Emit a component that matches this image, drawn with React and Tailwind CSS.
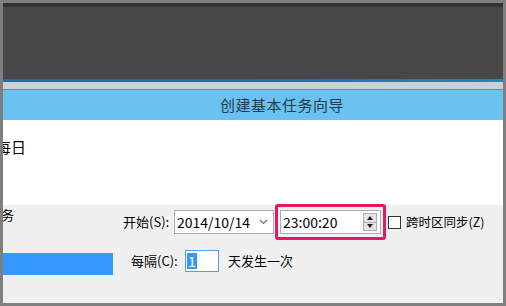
export default function App() {
  const font = { fontFamily: '"Microsoft YaHei", "Noto Sans CJK SC", "Liberation Sans", sans-serif' };
  return (
    <div className="w-[506px] h-[306px] bg-[#7f7f7f] p-[3px] overflow-hidden" style={font}>
      <div className="w-[500px] h-[300px] flex flex-col overflow-hidden">
        {/* dark top area */}
        <div className="h-[4px] bg-[#333333]" />
        <div className="h-[72px] bg-[#474747]" />
        <div className="h-[3px] bg-gradient-to-r from-[#1c6fa3] via-[#1c6fa3] to-[#2185c8]" />
        <div className="h-[7px] bg-[#d0d0d0]" />
        <div className="h-[1px] bg-[#5d8fae]" />

        {/* title bar */}
        <div className="h-[30px] bg-[#6ac2f0] flex items-center justify-center pl-[58px]">
          <span className="text-[15px] text-[#213c4f] tracking-[0.5px]">创建基本任务向导</span>
        </div>

        {/* white content */}
        <div className="h-[85px] bg-white relative">
          <span className="absolute left-[-7px] top-[16px] text-[15px] text-black">每日</span>
        </div>

        {/* gray form area */}
        <div className="flex-1 bg-[#f0f0f0] relative text-[13px] text-black">
          <span className="absolute left-[-15px] top-[0px]">任务</span>

          <div className="absolute left-[0px] top-[48px] w-[110px] h-[22px] bg-[#3399ff]" />

          <div className="absolute left-[120px] top-[5px] flex items-center h-[24px]">
            <span className="w-[51px]">开始(S):</span>
            <div className="w-[100px] h-[24px] border border-[#abadb3] bg-white flex items-center pl-[2px] pr-[5px]">
              <span className="flex-1 text-[14px]">2014/10/14</span>
              <svg width="9" height="6" viewBox="0 0 9 6" className="text-[#707070]">
                <path d="M1 1 L4.5 4.5 L8 1" fill="none" stroke="currentColor" strokeWidth="1.2" />
              </svg>
            </div>
            <div className="ml-[1px] rounded-[3px] border-[3px] border-[#ea1466] p-[2px] w-[111px] h-[36px] flex items-center">
              <div className="w-full h-[24px] border border-[#abadb3] bg-white flex items-center pl-[2px] pr-[3px]">
                <span className="flex-1 text-[14px]">23:00:20</span>
                <div className="w-[14px] h-[18px] border border-[#acacac] bg-[#e5e5e5] flex flex-col">
                  <div className="flex-1 flex items-center justify-center border-b border-[#acacac]">
                    <svg width="6" height="4" viewBox="0 0 6 4"><path d="M0 4 L3 0 L6 4Z" fill="#222" /></svg>
                  </div>
                  <div className="flex-1 flex items-center justify-center">
                    <svg width="6" height="4" viewBox="0 0 6 4"><path d="M0 0 L3 4 L6 0Z" fill="#222" /></svg>
                  </div>
                </div>
              </div>
            </div>
            <div className="ml-[2px] w-[13px] h-[13px] border border-[#333] bg-white" />
            <span className="ml-[5px] text-[12.5px]">跨时区同步(Z)</span>
          </div>

          <div className="absolute left-[128px] top-[45px] flex items-center h-[22px]">
            <span className="w-[54px]">每隔(C):</span>
            <div className="w-[34px] h-[22px] border border-[#569de5] bg-white flex items-center pl-[1px]">
              <span className="bg-[#3399ff] text-white text-[14px] leading-[16px] px-[1px]">1</span>
            </div>
            <span className="ml-[9px]">天发生一次</span>
          </div>
        </div>
      </div>
    </div>
  );
}
